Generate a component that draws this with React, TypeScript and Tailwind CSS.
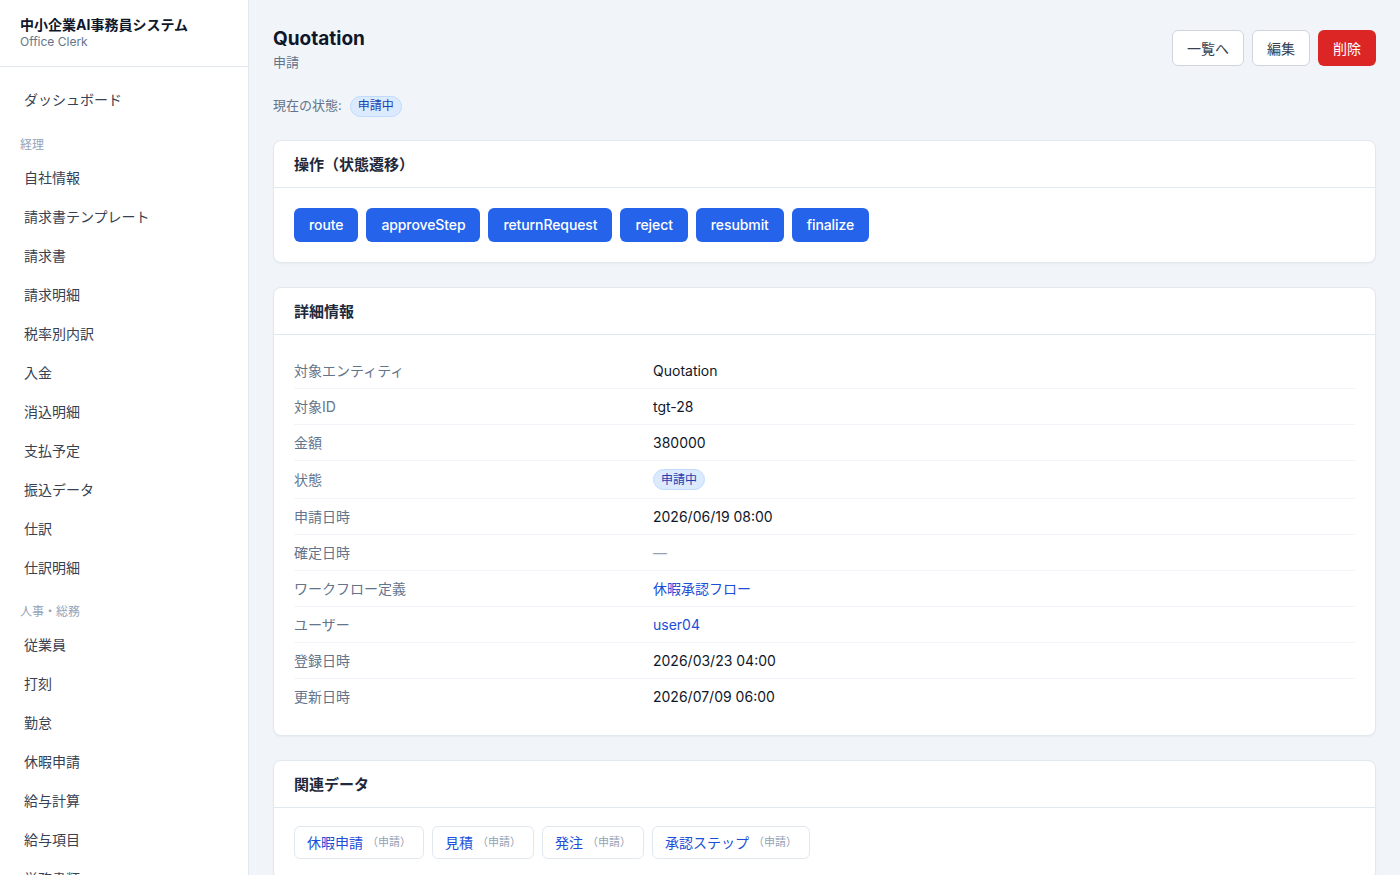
const NAV_SECTIONS = [
  {
    title: "経理",
    items: ["自社情報", "請求書テンプレート", "請求書", "請求明細", "税率別内訳", "入金", "消込明細", "支払予定", "振込データ", "仕訳", "仕訳明細"],
  },
  {
    title: "人事・総務",
    items: ["従業員", "打刻", "勤怠", "休暇申請", "給与計算", "給与項目", "労務書類"],
  },
];

const ACTIONS = ["route", "approveStep", "returnRequest", "reject", "resubmit", "finalize"];

const DETAILS: { label: string; value: string; kind?: "badge" | "link" | "muted" }[] = [
  { label: "対象エンティティ", value: "Quotation" },
  { label: "対象ID", value: "tgt-28" },
  { label: "金額", value: "380000" },
  { label: "状態", value: "申請中", kind: "badge" },
  { label: "申請日時", value: "2026/06/19 08:00" },
  { label: "確定日時", value: "—", kind: "muted" },
  { label: "ワークフロー定義", value: "休暇承認フロー", kind: "link" },
  { label: "ユーザー", value: "user04", kind: "link" },
  { label: "登録日時", value: "2026/03/23 04:00" },
  { label: "更新日時", value: "2026/07/09 06:00" },
];

const RELATED = ["休暇申請", "見積", "発注", "承認ステップ"];

function StatusBadge({ label }: { label: string }) {
  return (
    <span className="inline-flex items-center h-[21px] px-[7px] rounded-full bg-[#dbeafe] border border-[#bfdbfe] text-[#1e40af] text-[12px] leading-none">
      {label}
    </span>
  );
}

function Card({ title, children }: { title: string; children: React.ReactNode }) {
  return (
    <section className="bg-white border border-[#e2e8f0] rounded-lg shadow-[0_1px_2px_rgba(15,23,42,0.04)]">
      <div className="h-[47px] flex items-center pt-[3px] px-5 border-b border-[#e2e8f0]">
        <h2 className="text-[15px] font-bold text-[#1e293b]">{title}</h2>
      </div>
      {children}
    </section>
  );
}

export default function App() {
  return (
    <div
      className="flex h-[875px] overflow-hidden bg-[#f1f4f8] text-[#1e293b]"
      style={{ fontFamily: "Inter, 'Noto Sans CJK JP', sans-serif" }}
    >
      {/* Sidebar */}
      <aside className="w-[249px] shrink-0 bg-white border-r border-[#e2e8f0] flex flex-col">
        <div className="h-[67px] shrink-0 px-5 pt-[15px] border-b border-[#e2e8f0]">
          <div className="text-[14px] font-bold text-[#0f172a] leading-[19px]">中小企業AI事務員システム</div>
          <div className="text-[12px] text-[#64748b] leading-[16px]">Office Clerk</div>
        </div>
        <nav className="px-3 pt-[13px]">
          <div className="h-[39px] flex items-center px-3 text-[14px] text-[#374151]">ダッシュボード</div>
          {NAV_SECTIONS.map((section, si) => (
            <div key={section.title}>
              <div className={`${si === 0 ? "h-[39px]" : "h-[38px]"} flex items-center pt-[12px] pl-2 text-[12px] text-[#94a3b8]`}>
                {section.title}
              </div>
              {section.items.map((item) => (
                <div key={item} className="h-[39px] flex items-center px-3 text-[14px] text-[#374151]">
                  {item}
                </div>
              ))}
            </div>
          ))}
        </nav>
      </aside>

      {/* Main */}
      <main className="flex-1 px-6 pt-[26px] overflow-hidden">
        <div className="flex items-start justify-between">
          <div>
            <h1 className="text-[19px] font-bold text-[#0f172a] leading-[26px]">Quotation</h1>
            <div className="text-[13px] text-[#64748b] mt-[1px]">申請</div>
          </div>
          <div className="flex gap-2 pt-[4px]">
            <button className="h-9 px-[14px] rounded-md border border-[#d1d5db] bg-white text-[14px] text-[#374151]">一覧へ</button>
            <button className="h-9 px-[14px] rounded-md border border-[#d1d5db] bg-white text-[14px] text-[#374151]">編集</button>
            <button className="h-9 px-[15px] rounded-md bg-[#dc2626] text-[14px] text-white">削除</button>
          </div>
        </div>

        <div className="flex items-center gap-2 mt-[23px] text-[13px] text-[#64748b]">
          <span>現在の状態:</span>
          <StatusBadge label="申請中" />
        </div>

        <div className="flex flex-col gap-6 mt-[23px]">
          <Card title="操作（状態遷移）">
            <div className="flex gap-2 px-5 pt-5 pb-5">
              {ACTIONS.map((a) => (
                <button key={a} className="h-[34px] px-[15px] rounded-md bg-[#2563eb] text-white text-[14px] font-medium tracking-[-0.1px]">
                  {a}
                </button>
              ))}
            </div>
          </Card>

          <Card title="詳細情報">
            <div className="px-5 pt-[18px] pb-5">
              {DETAILS.map((row, i) => (
                <div
                  key={row.label}
                  className={`grid grid-cols-[359px_1fr] ${row.kind === "badge" ? "h-[38px]" : "h-9"} items-center text-[14px] ${i < DETAILS.length - 1 ? "border-b border-[#f1f5f9]" : ""}`}
                >
                  <div className="text-[#64748b]">{row.label}</div>
                  <div>
                    {row.kind === "badge" ? (
                      <StatusBadge label={row.value} />
                    ) : row.kind === "link" ? (
                      <span className="text-[#1d4ed8]">{row.value}</span>
                    ) : row.kind === "muted" ? (
                      <span className="text-[#94a3b8]">{row.value}</span>
                    ) : (
                      <span className="text-[#0f172a]">{row.value}</span>
                    )}
                  </div>
                </div>
              ))}
            </div>
          </Card>

          <Card title="関連データ">
            <div className="flex gap-2 px-5 pt-[18px] pb-5">
              {RELATED.map((r) => (
                <span key={r} className="h-[33px] inline-flex items-center gap-1 px-3 rounded-md border border-[#e2e8f0] bg-white">
                  <span className="text-[14px] text-[#1d4ed8]">{r}</span>
                  <span className="text-[11px] text-[#94a3b8]">（申請）</span>
                </span>
              ))}
            </div>
          </Card>
        </div>
      </main>
    </div>
  );
}
